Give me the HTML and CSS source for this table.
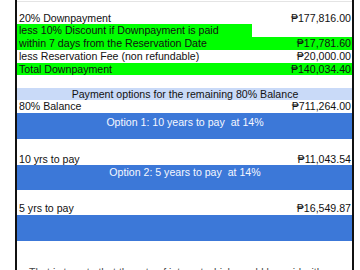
FILE: index.html
```html
<!DOCTYPE html>
<html>
<head>
<meta charset="utf-8">
<link rel="stylesheet" href="styles.css">
</head>
<body>
<div class="sheet">
  <div class="row r-top"></div>
  <div class="row r-a"><span>20% Downpayment</span><span class="val">₱177,816.00</span></div>
  <div class="row r-b"><span class="green-part">less 10% Discount if Downpayment is paid</span></div>
  <div class="row r-c green"><span>within 7 days from the Reservation Date</span><span class="val">₱17,781.60</span></div>
  <div class="row r-d"><span>less Reservation Fee (non refundable)</span><span class="val">₱20,000.00</span></div>
  <div class="row r-e green"><span>Total Downpayment</span><span class="val">₱140,034.40</span></div>
  <div class="row r-f"></div>
  <div class="row r-g light center"><span>Payment options for the remaining 80% Balance</span></div>
  <div class="row r-h"><span>80% Balance</span><span class="val">₱711,264.00</span></div>
  <div class="row blue center top r-i"><span>Option 1: 10 years to pay&nbsp; at 14%</span></div>
  <div class="row bottom r-k"><span>10 yrs to pay</span><span class="val">₱11,043.54</span></div>
  <div class="row blue center top r-m"><span>Option 2: 5 years to pay&nbsp; at 14%</span></div>
  <div class="row bottom r-o"><span>5 yrs to pay</span><span class="val">₱16,549.87</span></div>
  <div class="row blue r-q"></div>
  <div class="row r-s"></div>
  <p class="note">That is to note that the rate of interest which would be paid with</p>
</div>
</body>
</html>
```

FILE: styles.css
```css
html, body {
  margin: 0;
  padding: 0;
  background: #fff;
  height: 270px;
  overflow: hidden;
}
.sheet {
  margin-left: 15px;
  width: 335px;
  height: 270px;
  overflow: hidden;
  border-left: 2px solid #111;
  border-right: 2px solid #111;
  font-family: "Liberation Sans", Arial, "DejaVu Sans", sans-serif;
  font-size: 10.6px;
  line-height: 12.5px;
  color: #111;
}
.row {
  display: flex;
  justify-content: space-between;
  align-items: flex-start;
  padding: 0 1px 0 2px;
  white-space: nowrap;
}
.val { text-align: right; }
.r-top { border-top: 1px solid #e4e4e4; box-sizing: border-box; margin-top: 1px; height: 10.5px; }
.r-a { height: 12.5px; }
.r-b { height: 13px; padding: 0; }
.green-part {
  display: block;
  background: #00ff00;
  width: 235px;
  height: 13px;
  padding-left: 2px;
  box-sizing: border-box;
}
.r-c { height: 13px; }
.r-d { height: 12.5px; }
.r-e { height: 12.5px; }
.r-f { height: 12.5px; }
.r-g { height: 12.5px; }
.r-h { height: 12.5px; }
.r-i { height: 26.5px; padding-top: 3px; box-sizing: border-box; }
.r-k { height: 26px; }
.r-m { height: 24.5px; padding-top: 1px; box-sizing: border-box; }
.r-o { height: 25px; }
.r-q { height: 26px; }
.r-s { height: 25px; }
.green { background: #00ff00; }
.light { background: #c9daf8; }
.blue { background: #3c78d8; color: #f4f7ff; }
.center { justify-content: center; }
.top { align-items: flex-start; }
.bottom { align-items: flex-end; }
.note {
  margin: 0;
  padding-left: 12px;
  color: #444;
  font-size: 10.5px;
  line-height: 12px;
  white-space: nowrap;
}
```
